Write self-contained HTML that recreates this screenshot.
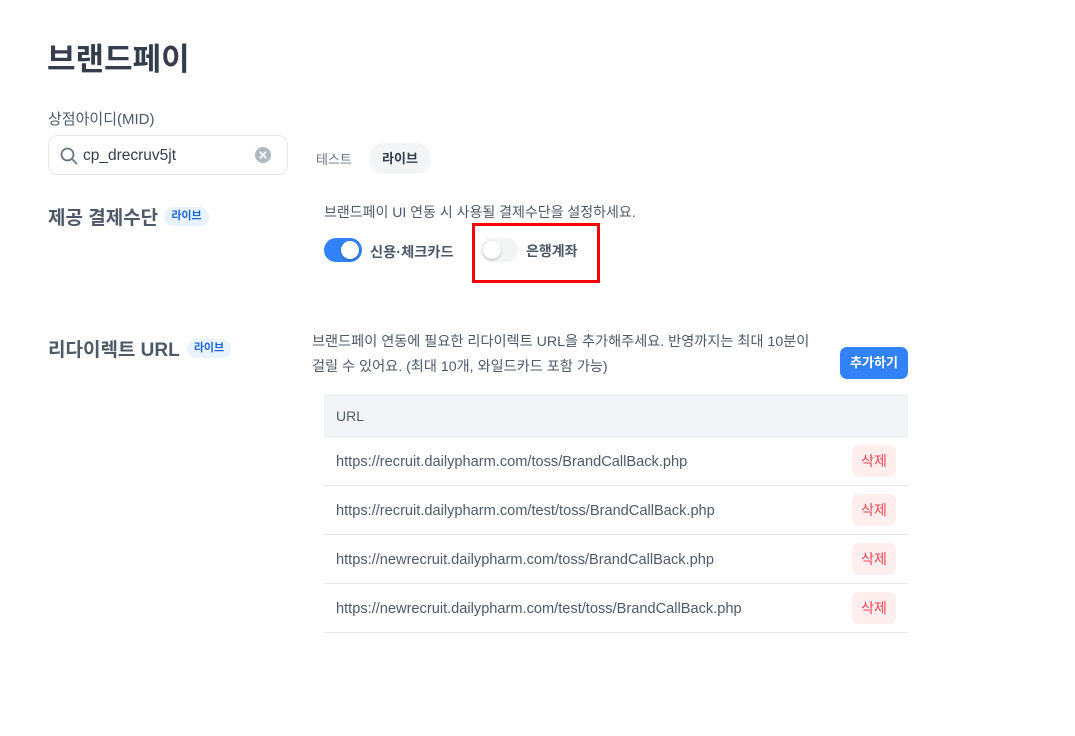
<!DOCTYPE html>
<html><head><meta charset="utf-8"><style>
*{margin:0;padding:0;box-sizing:border-box}
body{width:1075px;height:736px;background:#fff;font-family:"Liberation Sans","Noto Sans CJK KR",sans-serif;position:relative;overflow:hidden;color:#4e5968}
.a{position:absolute;white-space:nowrap}
.badge{position:absolute;background:#e8f3ff;color:#1b64da;font-size:11px;font-weight:bold;border-radius:10px;height:19px;line-height:19px;text-align:center}
.tg{position:absolute;width:38px;height:24px;border-radius:12px}
.tg i{position:absolute;top:3px;width:18px;height:18px;border-radius:50%;background:#fff;box-shadow:0 1px 2px rgba(0,0,0,.25)}
.row{position:absolute;left:324px;width:584px;height:49px;border-bottom:1px solid #e5e8eb}
.row span{position:absolute;left:12px;top:17px;font-size:14.6px;color:#4e5968}
.row b{position:absolute;left:528px;top:8px;width:44px;height:32px;line-height:32px;text-align:center;background:#ffeeee;color:#f04452;border-radius:7px;font-size:14px;font-weight:normal}
</style></head><body>
<div class="a" style="left:47px;top:34px;font-size:31px;font-weight:bold;color:#333d4b">브랜드페이</div>
<div class="a" style="left:48px;top:108px;font-size:15px;color:#4e5968">상점아이디(MID)</div>
<div class="a" style="left:48px;top:135px;width:240px;height:40px;border:1px solid #e5e8eb;border-radius:10px">
<svg style="position:absolute;left:11px;top:11px" width="18" height="18" viewBox="0 0 18 18"><circle cx="7.5" cy="7.5" r="6" fill="none" stroke="#6b7684" stroke-width="1.8"/><path d="M12 12l4.5 4.5" stroke="#6b7684" stroke-width="1.8" stroke-linecap="round"/></svg>
<span style="position:absolute;left:34px;top:11px;font-size:15.5px;color:#333d4b">cp_drecruv5jt</span>
<svg style="position:absolute;left:206px;top:11px" width="16" height="16" viewBox="0 0 16 16"><circle cx="8" cy="8" r="8" fill="#b0b8c1"/><path d="M5.3 5.3l5.4 5.4M10.7 5.3l-5.4 5.4" stroke="#fff" stroke-width="1.8" stroke-linecap="round"/></svg>
</div>
<div class="a" style="left:316px;top:149px;font-size:13px;color:#6b7684">테스트</div>
<div class="a" style="left:369px;top:143px;width:62px;height:31px;border-radius:16px;background:#f2f4f6;font-size:13px;font-weight:bold;color:#333d4b;text-align:center;line-height:31px">라이브</div>

<div class="a" style="left:48px;top:203px;font-size:19px;font-weight:bold;color:#4e5968">제공 결제수단</div>
<div class="badge" style="left:164px;top:207px;width:45px">라이브</div>
<div class="a" style="left:324px;top:202px;font-size:14px">브랜드페이 UI 연동 시 사용될 결제수단을 설정하세요.</div>
<div class="tg" style="left:324px;top:238px;background:#3182f6"><i style="left:17px"></i></div>
<div class="a" style="left:370px;top:241px;font-size:14.3px;font-weight:bold;color:#4e5968">신용·체크카드</div>
<div class="tg" style="left:480px;top:238px;background:#f2f4f6"><i style="left:3px"></i></div>
<div class="a" style="left:526px;top:241px;font-size:14px;font-weight:bold;color:#4e5968">은행계좌</div>
<div class="a" style="left:472px;top:223px;width:128px;height:60px;border:3px solid #f00"></div>

<div class="a" style="left:48px;top:335px;font-size:19px;font-weight:bold;color:#4e5968">리다이렉트 URL</div>
<div class="badge" style="left:187px;top:339px;width:44px">라이브</div>
<div class="a" style="left:312px;top:330px;font-size:14.2px;line-height:25px">브랜드페이 연동에 필요한 리다이렉트 URL을 추가해주세요. 반영까지는 최대 10분이<br>걸릴 수 있어요. (최대 10개, 와일드카드 포함 가능)</div>
<div class="a" style="left:840px;top:347px;width:68px;height:32px;background:#3182f6;color:#fff;border-radius:7px;font-size:13px;font-weight:bold;text-align:center;line-height:32px">추가하기</div>
<div class="a" style="left:324px;top:395px;width:584px;height:42px;background:#f2f4f6;border-top:1px solid #e5e8eb;border-bottom:1px solid #e5e8eb"><span style="position:absolute;left:12px;top:12px;font-size:14px;color:#4e5968">URL</span></div>
<div class="row" style="top:437px"><span>https://recruit.dailypharm.com/toss/BrandCallBack.php</span><b>삭제</b></div>
<div class="row" style="top:486px"><span>https://recruit.dailypharm.com/test/toss/BrandCallBack.php</span><b>삭제</b></div>
<div class="row" style="top:535px"><span>https://newrecruit.dailypharm.com/toss/BrandCallBack.php</span><b>삭제</b></div>
<div class="row" style="top:584px"><span>https://newrecruit.dailypharm.com/test/toss/BrandCallBack.php</span><b>삭제</b></div>
</body></html>
